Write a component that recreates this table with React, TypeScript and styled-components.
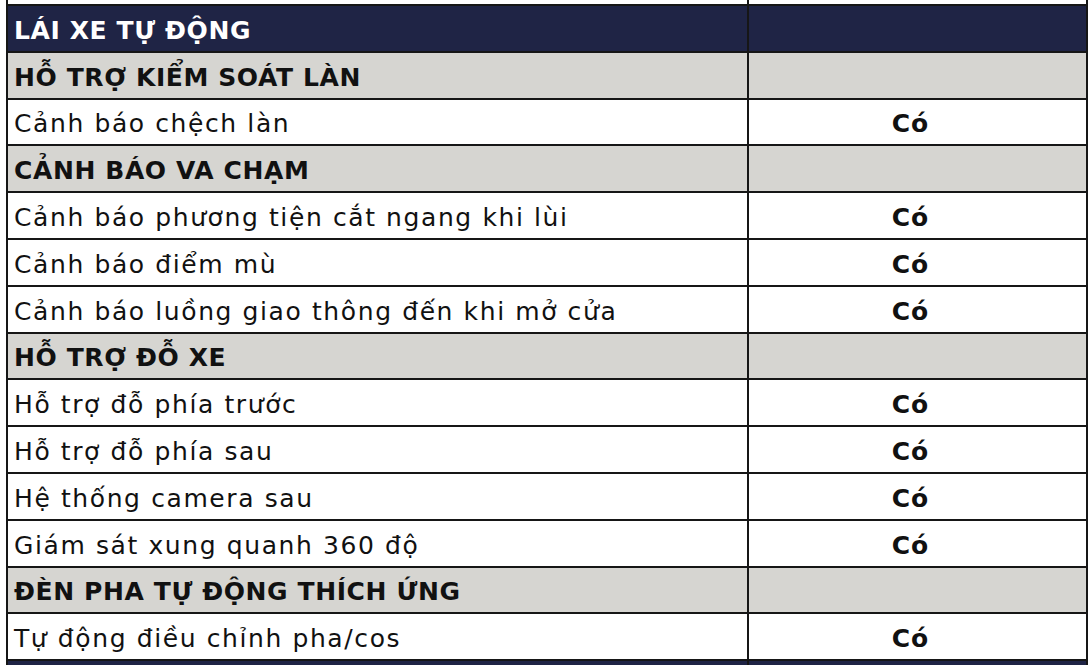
import styled, { createGlobalStyle } from "styled-components";

const GlobalStyle = createGlobalStyle`
  html, body {
    margin: 0;
    padding: 0;
    background: #ffffff;
  }
  body {
    font-family: "DejaVu Sans", "Noto Sans", sans-serif;
  }
`;

type Kind = "section" | "group" | "item";

interface Row {
  kind: Kind;
  label: string;
  value?: string;
}

const rows: Row[] = [
  { kind: "section", label: "LÁI XE TỰ ĐỘNG" },
  { kind: "group", label: "HỖ TRỢ KIỂM SOÁT LÀN" },
  { kind: "item", label: "Cảnh báo chệch làn", value: "Có" },
  { kind: "group", label: "CẢNH BÁO VA CHẠM" },
  { kind: "item", label: "Cảnh báo phương tiện cắt ngang khi lùi", value: "Có" },
  { kind: "item", label: "Cảnh báo điểm mù", value: "Có" },
  { kind: "item", label: "Cảnh báo luồng giao thông đến khi mở cửa", value: "Có" },
  { kind: "group", label: "HỖ TRỢ ĐỖ XE" },
  { kind: "item", label: "Hỗ trợ đỗ phía trước", value: "Có" },
  { kind: "item", label: "Hỗ trợ đỗ phía sau", value: "Có" },
  { kind: "item", label: "Hệ thống camera sau", value: "Có" },
  { kind: "item", label: "Giám sát xung quanh 360 độ", value: "Có" },
  { kind: "group", label: "ĐÈN PHA TỰ ĐỘNG THÍCH ỨNG" },
  { kind: "item", label: "Tự động điều chỉnh pha/cos", value: "Có" },
  { kind: "section", label: "" },
];

const BG: Record<Kind, string> = {
  section: "#1f2445",
  group: "#d6d5d1",
  item: "#ffffff",
};

export default function App() {
  return (
    <>
      <GlobalStyle />
      <Page>
        <Table>
          <TableRow $kind="item" $stub>
            <Label $kind="item" />
            <Value />
          </TableRow>
          {rows.map((r, i) => (
            <TableRow key={i} $kind={r.kind}>
              <Label $kind={r.kind}>{r.label}</Label>
              <Value>{r.value}</Value>
            </TableRow>
          ))}
        </Table>
      </Page>
    </>
  );
}

const Page = styled.div`
  width: 1090px;
  height: 665px;
  overflow: hidden;
  background: #ffffff;
`;

const Table = styled.div`
  margin-left: 6px;
  width: 1082px;
  border-left: 2px solid #161616;
  border-right: 2px solid #161616;
  box-sizing: border-box;
`;

const TableRow = styled.div<{ $kind: Kind; $stub?: boolean }>`
  display: grid;
  grid-template-columns: 739px 1fr;
  height: ${(p) => (p.$stub ? "6px" : "46.8px")};
  box-sizing: border-box;
  border-bottom: 2px solid #161616;
  background: ${(p) => BG[p.$kind]};
`;

const Label = styled.div<{ $kind: Kind }>`
  display: flex;
  align-items: center;
  padding: 4px 0 0 6px;
  font-size: 25px;
  letter-spacing: ${(p) => (p.$kind === "item" ? "1.6px" : "0.6px")};
  font-weight: ${(p) => (p.$kind === "item" ? 400 : 700)};
  color: ${(p) => (p.$kind === "section" ? "#ffffff" : "#111111")};
  white-space: nowrap;
  overflow: hidden;
`;

const Value = styled.div`
  display: flex;
  align-items: center;
  justify-content: center;
  padding: 4px 14px 0 0;
  border-left: 2px solid #161616;
  font-size: 25px;
  letter-spacing: 1px;
  font-weight: 700;
  color: #111111;
`;
